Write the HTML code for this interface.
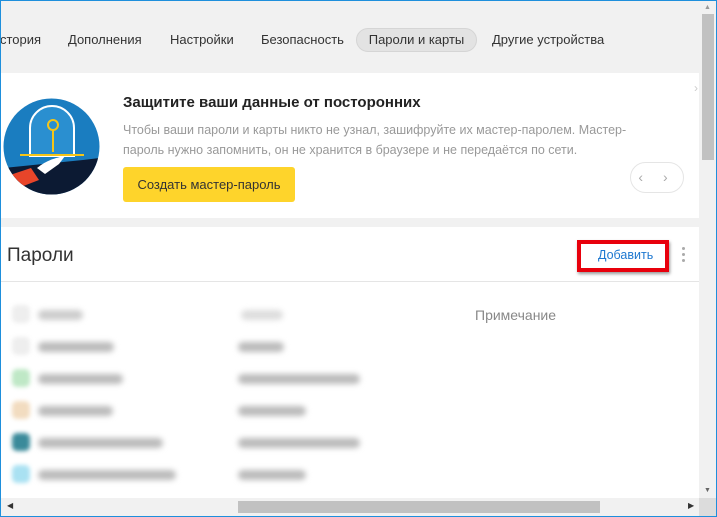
<!DOCTYPE html>
<html><head><meta charset="utf-8"><style>
*{margin:0;padding:0;box-sizing:border-box}
body{width:717px;height:517px;overflow:hidden;background:#f1f1f1;font-family:"Liberation Sans","DejaVu Sans",sans-serif;position:relative}
.frame{position:absolute;inset:0;border:1px solid #1e8fdc;border-top:1px solid #1e8fdc;pointer-events:none;z-index:10}
.tab{position:absolute;top:32px;font-size:13px;color:#333}
.pill{position:absolute;left:356px;top:28px;width:121px;height:24px;background:#e3e3e3;border:1px solid #d5d5d5;border-radius:12px;font-size:13px;color:#333;text-align:center;line-height:22px}
.card{position:absolute;left:1px;top:73px;width:698px;height:145px;background:#fff}
.card2{position:absolute;left:1px;top:227px;width:698px;height:271px;background:#fff}
.b{position:absolute;height:10px;background:#bbb;border-radius:5px;filter:blur(3px)}
.ic{position:absolute;width:18px;height:18px;border-radius:5px;filter:blur(2px)}
</style></head><body>
<div class="tab" style="left:0">стория</div>
<div class="tab" style="left:68px">Дополнения</div>
<div class="tab" style="left:170px">Настройки</div>
<div class="tab" style="left:261px">Безопасность</div>
<div class="pill">Пароли и карты</div>
<div class="tab" style="left:492px">Другие устройства</div>

<div class="card">
<svg style="position:absolute;left:2px;top:25px" width="97" height="97" viewBox="0 0 97 97">
<defs><clipPath id="c"><circle cx="48.5" cy="48.5" r="48"/></clipPath></defs>
<circle cx="48.5" cy="48.5" r="48" fill="#1a7dc0"/>
<g clip-path="url(#c)">
<path d="M27 58 V30 A22 22 0 0 1 71 30 V58Z" fill="#2a8fd0" stroke="#fff" stroke-width="2"/>
<path d="M0 70 L40 66 L80 62 L97 60 V97 H0Z" fill="#0c1a33"/>
<path d="M4 78 L28 70 L36 82 L10 92Z" fill="#e8452a"/>
<path d="M34 70 C44 62 52 60 62 58 L56 66 L42 76Z" fill="#fff"/>
<rect x="17" y="56" width="64" height="2" fill="#f5c518"/>
<circle cx="50" cy="27" r="5" fill="none" stroke="#f5c518" stroke-width="2"/>
<rect x="49" y="32" width="2" height="22" fill="#f5c518"/>
</g></svg>
<div style="position:absolute;left:122px;top:21px;font-size:15px;font-weight:bold;color:#222">Защитите ваши данные от посторонних</div>
<div style="position:absolute;left:122px;top:47px;width:540px;font-size:12.5px;line-height:20px;color:#999">Чтобы ваши пароли и карты никто не узнал, зашифруйте их мастер-паролем. Мастер-пароль нужно запомнить, он не хранится в браузере и не передаётся по сети.</div>
<div style="position:absolute;left:122px;top:94px;width:172px;height:35px;background:#fed42b;border-radius:3px;font-size:13px;color:#333;line-height:35px;text-align:center">Создать мастер-пароль</div>
<div style="position:absolute;left:629px;top:89px;width:54px;height:31px;border:1px solid #e5e5e5;border-radius:16px;color:#aaa;font-size:14px;line-height:29px;text-align:center;letter-spacing:8px">‹ ›</div>
<div style="position:absolute;left:693px;top:8px;color:#ccc;font-size:12px">›</div>
</div>

<div class="card2">
<div style="position:absolute;left:6px;top:18px;font-size:19px;color:#333">Пароли</div>
<div style="position:absolute;left:576px;top:13px;width:92px;height:32px;border:4px solid #e8000c;box-shadow:1px 2px 3px rgba(0,0,0,.4)"></div>
<div style="position:absolute;left:597px;top:21px;font-size:12.5px;color:#1e78d0">Добавить</div>
<div style="position:absolute;left:681px;top:20px;width:3px;height:3px;background:#aaa;border-radius:2px;box-shadow:0 6px #aaa,0 12px #aaa"></div>
<div style="position:absolute;left:0;top:54px;width:698px;height:1px;background:#e5e5e5"></div>
<div style="position:absolute;left:474px;top:80px;font-size:14px;color:#888">Примечание</div>
<div class="ic" style="left:11px;top:78px;background:#eee"></div><div class="b" style="left:37px;top:83px;width:45px;background:#ccc"></div><div class="b" style="left:240px;top:83px;width:42px;background:#ddd"></div>
<div class="ic" style="left:11px;top:110px;background:#eee"></div><div class="b" style="left:37px;top:115px;width:76px"></div><div class="b" style="left:237px;top:115px;width:46px"></div>
<div class="ic" style="left:11px;top:142px;background:#bfe8c6"></div><div class="b" style="left:37px;top:147px;width:85px"></div><div class="b" style="left:237px;top:147px;width:122px"></div>
<div class="ic" style="left:11px;top:174px;background:#f2dcc0"></div><div class="b" style="left:37px;top:179px;width:75px"></div><div class="b" style="left:237px;top:179px;width:68px"></div>
<div class="ic" style="left:11px;top:206px;background:#3a8a9a"></div><div class="b" style="left:37px;top:211px;width:125px"></div><div class="b" style="left:237px;top:211px;width:122px"></div>
<div class="ic" style="left:11px;top:238px;background:#a9e1f2"></div><div class="b" style="left:37px;top:243px;width:138px"></div><div class="b" style="left:237px;top:243px;width:68px"></div>
</div>

<div style="position:absolute;left:699px;top:0;width:17px;height:498px;background:#f1f1f1"></div>
<div style="position:absolute;left:702px;top:14px;width:12px;height:146px;background:#c1c1c1"></div>
<div style="position:absolute;left:704px;top:4px;font-size:7px;color:#999">▲</div>
<div style="position:absolute;left:704px;top:487px;font-size:7px;color:#666">▼</div>
<div style="position:absolute;left:0;top:498px;width:717px;height:19px;background:#f1f1f1"></div>
<div style="position:absolute;left:238px;top:501px;width:362px;height:12px;background:#c1c1c1"></div>
<div style="position:absolute;left:7px;top:501px;font-size:8px;color:#333">◀</div>
<div style="position:absolute;left:688px;top:501px;font-size:8px;color:#333">▶</div>
<div style="position:absolute;left:699px;top:498px;width:17px;height:18px;background:#dcdcdc"></div>
<div class="frame"></div>
</body></html>
